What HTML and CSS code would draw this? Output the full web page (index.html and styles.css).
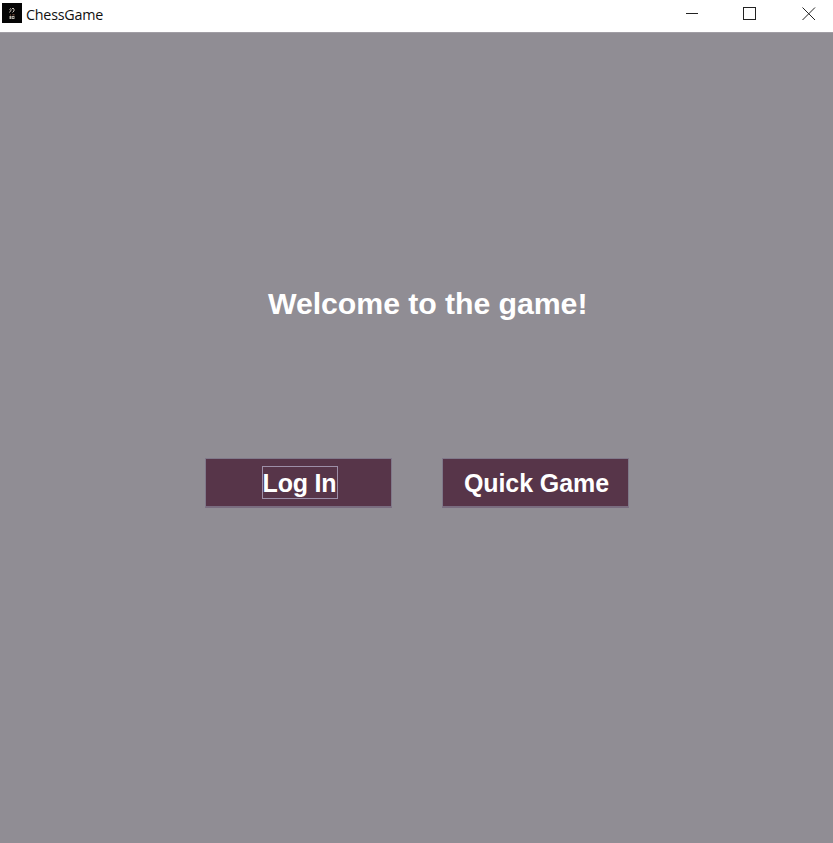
FILE: index.html
```
<!DOCTYPE html>
<html lang="en">
<head>
<meta charset="utf-8">
<title>ChessGame</title>
<link rel="stylesheet" href="styles.css">
</head>
<body>
<header class="titlebar">
  <svg class="app-icon" width="20" height="20" viewBox="0 0 20 20" fill="none">
    <rect width="20" height="20" fill="#050505"/>
    <path d="M7.500 6.500l1.500-1M7.500 9.500l2-3M10 5.500h2M12 6v2l-1.500 1.500" stroke="#c5beb4"/>
    <path d="M8 12h1M10.500 11.800h2" stroke="#8d5b45"/>
    <path d="M7.500 13h2v3h-2zM10 13h2.500v3H10z" fill="#bab6ac"/>
    <path d="M10.500 14.500h1.500" stroke="#444"/>
  </svg>
  <span class="title">ChessGame</span>
  <svg class="controls" width="135" height="16" viewBox="0 0 135 16" fill="none" stroke="#222" stroke-width="1">
    <path d="M2 7.500h12"/>
    <rect x="59.500" y="1.500" width="12" height="12"/>
    <path d="M118.500 1.500l12.500 12.500M131 1.500l-12.500 12.500"/>
  </svg>
</header>
<main class="screen">
  <h1 class="welcome">Welcome to the game!</h1>
  <div class="actions">
    <button class="action"><span class="label focused">Log In</span></button>
    <button class="action"><span class="label">Quick Game</span></button>
  </div>
</main>
</body>
</html>
```
FILE: styles.css
```
* { box-sizing: border-box; }
body {
  margin: 0;
  height: 843px;
  display: flex;
  flex-direction: column;
  overflow: hidden;
  background: #908d94;
  font-family: "Liberation Sans", Arial, sans-serif;
}
.titlebar {
  height: 32px;
  flex: none;
  display: flex;
  align-items: flex-start;
  padding: 3px 14px 0 2px;
  background: #fff;
}
.title {
  margin: 1px 0 0 4px;
  font: 14.300px/21px "Open Sans", "Noto Sans", sans-serif;
  letter-spacing: -0.220px;
  color: #111;
}
.controls { margin: 3px 0 0 auto; }
.screen {
  flex: 1;
  display: flex;
  flex-direction: column;
  border-top: 1px solid #a19ea5;
}
.welcome {
  margin: 253px 0 0 268px;
  font-size: 30.300px;
  line-height: 36px;
  letter-spacing: -0.080px;
  font-weight: bold;
  color: #fff;
  white-space: nowrap;
}
.actions {
  display: flex;
  gap: 50px;
  margin: 136px 0 0 205px;
}
.action {
  width: 187px;
  height: 50px;
  padding: 0;
  display: flex;
  align-items: center;
  justify-content: center;
  border: 1px solid #80798a;
  border-bottom: 2px solid #7a6d80;
  border-radius: 0;
  background: #573549;
  color: #fff;
  font: bold 25px/31px "Liberation Sans", Arial, sans-serif;
  letter-spacing: -0.080px;
}
.label {
  height: 33px;
  padding: 1px 0 0 1px;
  border: 1px solid transparent;
  white-space: nowrap;
  margin-left: 1px;
}
.focused {
  width: 76px;
  padding-left: 0;
  margin-left: 2px;
  border-color: #9d8fa8;
  letter-spacing: -0.200px;
}
```
